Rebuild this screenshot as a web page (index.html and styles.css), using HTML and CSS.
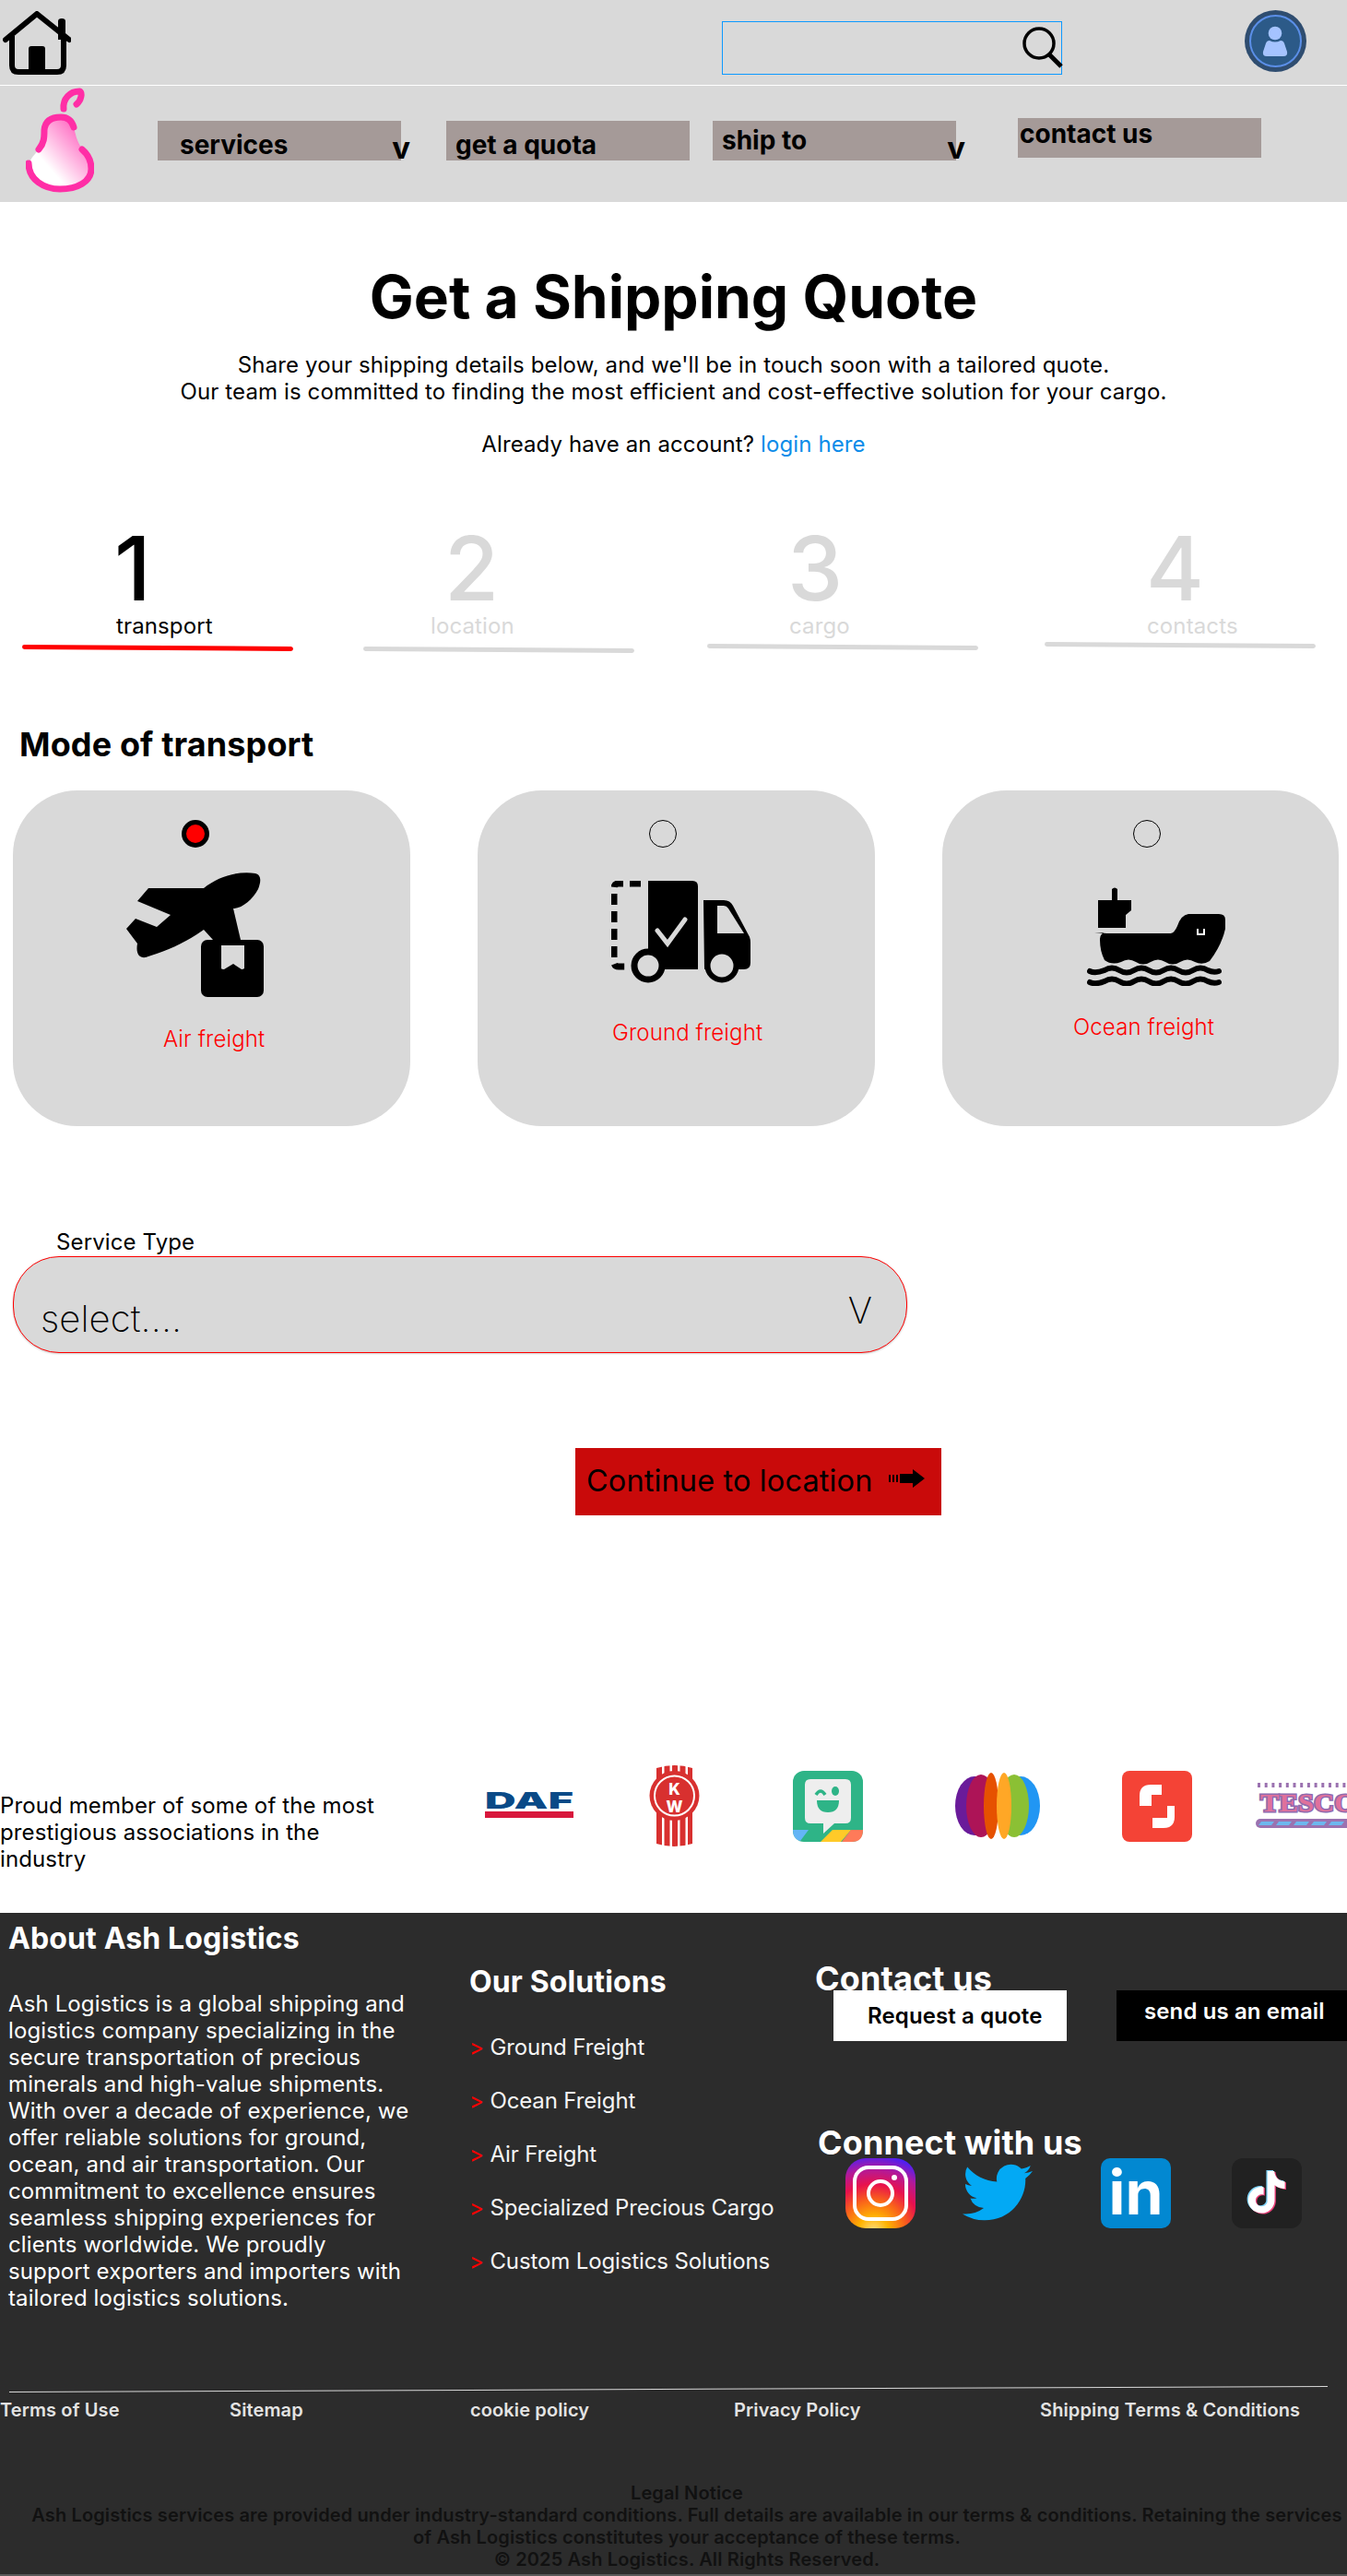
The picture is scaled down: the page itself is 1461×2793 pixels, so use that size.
FILE: index.html
```html
<!DOCTYPE html>
<html lang="en">
<head>
    <meta charset="UTF-8">
    <meta name="viewport" content="width=device-width, initial-scale=1.0">
    <title>Get a Shipping Quote - Ash Logistics</title>
    <link rel="stylesheet" href="styles.css">
</head>
<body>
    <header class="topbar">
        <svg class="home-icon" viewBox="0 0 74 70" width="74" height="70">
            <path d="M3 31 37 3 72 31" fill="none" stroke="#000" stroke-width="6" stroke-linecap="round" stroke-linejoin="round"/>
            <path d="M60 11q0-3 4-3t4 3v20h-8z"/>
            <path d="M10 27v32q0 7 7 7h42q7 0 7-7V27" fill="none" stroke="#000" stroke-width="6"/>
            <path d="M28 66V41q0-3 3-3h12q3 0 3 3v25z"/>
        </svg>
        <div class="search-box">
            <svg class="search-icon" viewBox="0 0 44 45" width="44" height="45">
                <circle cx="18" cy="18" r="16" fill="none" stroke="#000" stroke-width="3.500"/>
                <path d="M29 30 42 43" stroke="#000" stroke-width="5"/>
            </svg>
        </div>
        <svg class="avatar" viewBox="0 0 67 67" width="67" height="67">
            <circle cx="33.500" cy="33.500" r="33.500" fill="#2f4d70"/>
            <circle cx="33.500" cy="33.500" r="27.500" fill="#2c5a88" stroke="#5b8fe8" stroke-width="2"/>
            <circle cx="33" cy="25" r="7.300" fill="#a5c3ff"/>
            <path d="M27 33q6 3 12 0 3 0 4 3l3 9q1 5-4 5H24q-5 0-4-5l3-9q1-3 4-3z" fill="#a5c3ff"/>
        </svg>
    </header>

    <nav class="navbar">
        <svg class="pear" viewBox="0 0 74 114" width="74" height="114">
            <defs>
                <linearGradient id="pearFill" x1="0.1" y1="0.85" x2="0.85" y2="0.1">
                    <stop offset="0.25" stop-color="#fff"/>
                    <stop offset="1" stop-color="#ff5cbc"/>
                </linearGradient>
            </defs>
            <path d="M39 32C26 32 20 38 20 48 19 60 16 64 10 72 4 78 3 84 3 88 5 103 20 110 35 110 55 110 72 102 71 88 71 78 66 72 61 66 55 58 54 50 52 43 50 36 45 32 39 32z" fill="url(#pearFill)"/>
            <path d="M14 67C20 60 20 54 20 46 21 36 28 32 38 32 45 32 50 36 52 43" fill="none" stroke="#ff2ea6" stroke-width="7" stroke-linecap="round"/>
            <path d="M3 82C3 100 20 110 37 110 56 110 71 102 71 88 71 78 67 72 61 67" fill="none" stroke="#ff2ea6" stroke-width="7" stroke-linecap="round"/>
            <path d="M41 23C40 12 48 4 58 4 62 5 60 14 55 18" fill="none" stroke="#ff2ea6" stroke-width="7" stroke-linecap="round"/>
        </svg>
        <a class="nav-item nav-services" href="#">services<span class="nav-caret">v</span></a>
        <a class="nav-item nav-quota" href="#">get a quota</a>
        <a class="nav-item nav-ship" href="#">ship to<span class="nav-caret">v</span></a>
        <a class="nav-item nav-contact" href="#">contact us</a>
    </nav>

    <main>
        <section class="hero">
            <h1>Get a Shipping Quote</h1>
            <p>Share your shipping details below, and we'll be in touch soon with a tailored quote.<br>Our team is committed to finding the most efficient and cost-effective solution for your cargo.</p>
            <p class="hero-login">Already have an account? <a href="#">login here</a></p>
        </section>

        <section class="steps">
            <div class="step step-1 is-active">
                <div class="step-num">1</div>
                <div class="step-label">transport</div>
                <div class="step-line"></div>
            </div>
            <div class="step step-2">
                <div class="step-num">2</div>
                <div class="step-label">location</div>
                <div class="step-line"></div>
            </div>
            <div class="step step-3">
                <div class="step-num">3</div>
                <div class="step-label">cargo</div>
                <div class="step-line"></div>
            </div>
            <div class="step step-4">
                <div class="step-num">4</div>
                <div class="step-label">contacts</div>
                <div class="step-line"></div>
            </div>
        </section>

        <h2 class="mode-title">Mode of transport</h2>
        <section class="cards">
            <div class="card card-air">
                <span class="radio is-checked"></span>
                <svg class="card-icon" viewBox="0 0 150 138" width="150" height="138">
                    <path d="M84 19C100 6 122 0 140 3 147 5 146 12 143 20 137 31 126 41 116 41L124 75H94L84 64C62 80 40 88 21 94 14 95 10 90 12 79L0 63 10 52 33 61 48 48 12 33 24 19z"/>
                    <rect x="81" y="75" width="68" height="62" rx="7"/>
                    <path d="M103 81h25v25q-1 1-3 1l-9-6-10 6q-3 0-3-1z" fill="#d9d9d9"/>
                </svg>
                <span class="card-label">Air freight</span>
            </div>
            <div class="card card-ground">
                <span class="radio"></span>
                <svg class="card-icon" viewBox="0 0 151 111" width="151" height="111">
                    <path d="M32 3H8Q3 3 3 8v80q0 5 5 5h12" fill="none" stroke="#000" stroke-width="7" stroke-dasharray="12 7"/>
                    <path d="M40 0h48q6 0 6 6v90H40z"/>
                    <path d="M50 54l11 14 19-26" fill="none" stroke="#d9d9d9" stroke-width="5" stroke-linecap="round"/>
                    <path d="M100 21h22q7 0 10 6l17 32q2 3 2 8v22q0 7-7 7h-43z"/>
                    <path d="M115 27h7q3 0 5 3l17 27h-29z" fill="#d9d9d9"/>
                    <circle cx="40" cy="92" r="15" fill="#d9d9d9" stroke="#000" stroke-width="7"/>
                    <circle cx="120" cy="92" r="15.500" fill="#d9d9d9" stroke="#000" stroke-width="6"/>
                </svg>
                <span class="card-label">Ground freight</span>
            </div>
            <div class="card card-ocean">
                <span class="radio"></span>
                <svg class="card-icon" viewBox="0 0 150 108" width="150" height="108">
                    <path d="M27 3q3-3 6 0v12h15v11l-6 5v14H12V15h15z"/>
                    <path d="M8 51h83q4-1 7-8 4-12 12-13h33q7 0 7 6v10q-4 18-17 35-8 5-16 1-8-5-16 0-8 5-16 0-8-5-16 0-8 5-16 0-8-5-16 0-10 4-18-2-5-10-5-22 0-8 7-8z"/>
                    <path d="M119 46h2v5h5v-5h2v7h-9z" fill="#fff"/>
                    <path d="M3 92q6 3 16-1 8-5 16 0 8 5 16 0 8-5 16 0 8 5 16 0 8-5 16 0 8 5 16 0 8-5 16 0 6 3 12 1" fill="none" stroke="#000" stroke-width="6" stroke-linecap="round"/>
                    <path d="M3 104q6 3 16-1 8-5 16 0 8 5 16 0 8-5 16 0 8 5 16 0 8-5 16 0 8 5 16 0 8-5 16 0 6 3 12 1" fill="none" stroke="#000" stroke-width="6" stroke-linecap="round"/>
                </svg>
                <span class="card-label">Ocean freight</span>
            </div>
        </section>

        <section class="service">
            <label class="service-label">Service Type</label>
            <div class="service-select">
                <span class="service-value">select....</span>
                <span class="service-caret">V</span>
            </div>
        </section>

        <a class="continue-btn" href="#">
            <span>Continue to location</span>
            <svg viewBox="0 0 39 20" width="39" height="20">
                <path d="M0 6h2v8H0zM4 6h2v8H4zM8 6h2v8H8zM12 5h14V0l13 10-13 10v-5H12z"/>
            </svg>
        </a>

        <section class="members">
            <p class="members-text">Proud member of some of the most prestigious associations in the industry</p>
            <svg class="logo-daf" viewBox="0 0 96 28" width="96" height="28">
                <text class="daf-word" x="0" y="18" textLength="96" lengthAdjust="spacingAndGlyphs">DAF</text>
                <rect y="21" width="96" height="7" fill="#d8173c"/>
            </svg>
            <svg class="logo-kw" viewBox="0 0 55 90" width="55" height="90">
                <path d="M8 4q20-6 39 0v82q-20 6-39 0z" fill="#d8302f"/>
                <path d="M14 0h2.500v90H14zM22.500 0H25v90h-2.500zM31 0h2.500v90H31zM39.500 0H42v90h-2.500z" fill="#fff"/>
                <circle cx="27.500" cy="34" r="27" fill="#d8302f"/>
                <circle cx="27.500" cy="34" r="21.500" fill="#d8302f" stroke="#fff" stroke-width="2"/>
                <text class="kw-text" x="27.500" y="33" text-anchor="middle">K</text>
                <text class="kw-text" x="27.500" y="52" text-anchor="middle">W</text>
            </svg>
            <svg class="logo-bitmoji" viewBox="0 0 76 77" width="76" height="77">
                <rect width="76" height="77" rx="12" fill="#2eb487"/>
                <path d="M0 64h17L8 76Q0 74 0 64z" fill="#64b5f6"/>
                <path d="M43 64h20l-11 13H30z" fill="#ffca28"/>
                <path d="M63 64h13q0 13-12 13H53z" fill="#ff7a59"/>
                <path d="M19 9h38q6 0 6 6v36q0 6-6 6H45L33 68V57H19q-6 0-6-6V15q0-6 6-6z" fill="#eeeeee"/>
                <path d="M25 26q5-8 10 0" fill="none" stroke="#2eb487" stroke-width="3.500"/>
                <ellipse cx="46" cy="22" rx="4" ry="5" fill="#2eb487"/>
                <path d="M26 32h24q0 13-12 13T26 32z" fill="#2eb487"/>
            </svg>
            <svg class="logo-petals" viewBox="0 0 94 72" width="94" height="72">
                <ellipse cx="72" cy="36" rx="21" ry="32" fill="#2196f3"/>
                <ellipse cx="22" cy="36" rx="21" ry="32" fill="#6a1b9a"/>
                <ellipse cx="29" cy="36" rx="16" ry="34" fill="#ad1457"/>
                <ellipse cx="65" cy="36" rx="16" ry="34" fill="#8bc034"/>
                <ellipse cx="40" cy="36" rx="8" ry="36" fill="#e65100"/>
                <ellipse cx="54" cy="36" rx="8" ry="36" fill="#ffa726"/>
            </svg>
            <svg class="logo-shortcut" viewBox="0 0 76 77" width="76" height="77">
                <rect width="76" height="77" rx="8" fill="#f44336"/>
                <path d="M19 38V27q0-12 12-12h12v11H32v12z" fill="#fff"/>
                <path d="M57 38v12q0 12-12 12H33V51h16V38z" fill="#fff"/>
            </svg>
            <svg class="logo-tesco" viewBox="0 0 99 50" width="99" height="50">
                <path class="tesco-dots" d="M2 2.500H99"/>
                <text class="tesco-word" x="5" y="31" textLength="104" lengthAdjust="spacingAndGlyphs">TESCO</text>
                <rect y="39" width="110" height="10" rx="5" fill="#9b72b0"/>
                <path d="M6 42h14l-3 4H3zM25 42h14l-3 4H22zM44 42h14l-3 4H41zM63 42h14l-3 4H60zM82 42h14l-3 4H79z" fill="#6db8ee"/>
            </svg>
        </section>
    </main>

    <footer class="footer">
        <div class="footer-main">
            <div class="footer-about">
                <h3>About Ash Logistics</h3>
                <p>Ash Logistics is a global shipping and logistics company specializing in the secure transportation of precious minerals and high-value shipments. With over a decade of experience, we offer reliable solutions for ground, ocean, and air transportation. Our commitment to excellence ensures seamless shipping experiences for clients worldwide. We proudly support exporters and importers with tailored logistics solutions.</p>
            </div>
            <div class="footer-solutions">
                <h3>Our Solutions</h3>
                <ul>
                    <li><span>&gt;</span> Ground Freight</li>
                    <li><span>&gt;</span> Ocean Freight</li>
                    <li><span>&gt;</span> Air Freight</li>
                    <li><span>&gt;</span> Specialized Precious Cargo</li>
                    <li><span>&gt;</span> Custom Logistics Solutions</li>
                </ul>
            </div>
            <div class="footer-contact">
                <h3 class="contact-title">Contact us</h3>
                <div class="contact-btns">
                    <a class="btn-quote" href="#">Request a quote</a>
                    <a class="btn-email" href="#">send us an email</a>
                </div>
                <h3 class="connect-title">Connect with us</h3>
                <div class="socials">
                    <svg class="social-ig" viewBox="0 0 76 76" width="76" height="76">
                        <defs>
                            <radialGradient id="igFill" cx="0.4" cy="1.05" r="1.1">
                                <stop offset="0" stop-color="#ffe08a"/>
                                <stop offset="0.2" stop-color="#ffb300"/>
                                <stop offset="0.42" stop-color="#f9611b"/>
                                <stop offset="0.62" stop-color="#e8114d"/>
                                <stop offset="0.82" stop-color="#b01a9c"/>
                                <stop offset="1" stop-color="#4b1ff5"/>
                            </radialGradient>
                        </defs>
                        <rect width="76" height="76" rx="22" fill="url(#igFill)"/>
                        <rect x="10" y="10" width="56" height="56" rx="15" fill="none" stroke="#fff" stroke-width="4"/>
                        <circle cx="38" cy="38" r="13" fill="none" stroke="#fff" stroke-width="4"/>
                        <circle cx="53" cy="21" r="3" fill="#fff"/>
                    </svg>
                    <svg class="social-tw" viewBox="0 0 24 20" width="76" height="62" preserveAspectRatio="none">
                        <path d="M23.953 2.57a10 10 0 0 1-2.825.775 4.958 4.958 0 0 0 2.163-2.723c-.951.555-2.005.959-3.127 1.184a4.92 4.92 0 0 0-8.384 4.482C7.69 6.095 4.067 4.13 1.64 1.162a4.822 4.822 0 0 0-.666 2.475c0 1.71.87 3.213 2.188 4.096a4.904 4.904 0 0 1-2.228-.616v.06a4.923 4.923 0 0 0 3.946 4.827 4.996 4.996 0 0 1-2.212.085 4.936 4.936 0 0 0 4.604 3.417 9.867 9.867 0 0 1-6.102 2.105c-.39 0-.779-.023-1.17-.067a13.995 13.995 0 0 0 7.557 2.209c9.053 0 13.998-7.496 13.998-13.985 0-.21 0-.42-.015-.63A9.935 9.935 0 0 0 24 2.59z" fill="#03a9f4"/>
                    </svg>
                    <div class="social-in">in</div>
                    <svg class="social-tt" viewBox="0 0 76 76" width="76" height="76">
                        <rect width="76" height="76" rx="12" fill="#212121"/>
                        <g transform="translate(15 14) scale(1.9)">
                            <path d="M12.525.02c1.31-.02 2.61-.01 3.91-.02.08 1.53.63 3.09 1.75 4.17 1.12 1.11 2.7 1.62 4.24 1.79v4.03c-1.44-.05-2.89-.35-4.2-.97-.57-.26-1.1-.59-1.62-.93-.01 2.92.01 5.84-.02 8.75-.08 1.4-.54 2.79-1.35 3.94-1.31 1.92-3.58 3.17-5.91 3.21-1.43.08-2.86-.31-4.08-1.03-2.02-1.19-3.44-3.37-3.65-5.71-.02-.5-.03-1-.01-1.49.18-1.9 1.12-3.72 2.58-4.96 1.66-1.44 3.98-2.13 6.15-1.72.02 1.48-.04 2.96-.04 4.44-.99-.32-2.15-.23-3.02.37-.63.41-1.11 1.04-1.36 1.75-.21.51-.15 1.07-.14 1.61.24 1.64 1.82 3.02 3.5 2.87 1.12-.01 2.19-.66 2.77-1.61.19-.33.4-.67.41-1.06.1-1.79.06-3.57.07-5.36.01-4.03-.01-8.05.02-12.07z" fill="#81d4fa" transform="translate(-.7 -.5)"/>
                            <path d="M12.525.02c1.31-.02 2.61-.01 3.91-.02.08 1.53.63 3.09 1.75 4.17 1.12 1.11 2.7 1.62 4.24 1.79v4.03c-1.44-.05-2.89-.35-4.2-.97-.57-.26-1.1-.59-1.62-.93-.01 2.92.01 5.84-.02 8.75-.08 1.4-.54 2.79-1.35 3.94-1.31 1.92-3.58 3.17-5.91 3.21-1.43.08-2.86-.31-4.08-1.03-2.02-1.19-3.44-3.37-3.65-5.71-.02-.5-.03-1-.01-1.49.18-1.9 1.12-3.72 2.58-4.96 1.66-1.44 3.98-2.13 6.15-1.72.02 1.48-.04 2.96-.04 4.44-.99-.32-2.15-.23-3.02.37-.63.41-1.11 1.04-1.36 1.75-.21.51-.15 1.07-.14 1.61.24 1.64 1.82 3.02 3.5 2.87 1.12-.01 2.19-.66 2.77-1.61.19-.33.4-.67.41-1.06.1-1.79.06-3.57.07-5.36.01-4.03-.01-8.05.02-12.07z" fill="#ec407a" transform="translate(.7 .5)"/>
                            <path d="M12.525.02c1.31-.02 2.61-.01 3.91-.02.08 1.53.63 3.09 1.75 4.17 1.12 1.11 2.7 1.62 4.24 1.79v4.03c-1.44-.05-2.89-.35-4.2-.97-.57-.26-1.1-.59-1.62-.93-.01 2.92.01 5.84-.02 8.75-.08 1.4-.54 2.79-1.35 3.94-1.31 1.92-3.58 3.17-5.91 3.21-1.43.08-2.86-.31-4.08-1.03-2.02-1.19-3.44-3.37-3.65-5.71-.02-.5-.03-1-.01-1.49.18-1.9 1.12-3.72 2.58-4.96 1.66-1.44 3.98-2.13 6.15-1.72.02 1.48-.04 2.96-.04 4.44-.99-.32-2.15-.23-3.02.37-.63.41-1.11 1.04-1.36 1.75-.21.51-.15 1.07-.14 1.61.24 1.64 1.82 3.02 3.5 2.87 1.12-.01 2.19-.66 2.77-1.61.19-.33.4-.67.41-1.06.1-1.79.06-3.57.07-5.36.01-4.03-.01-8.05.02-12.07z" fill="#fff"/>
                        </g>
                    </svg>
                </div>
            </div>
        </div>

        <div class="footer-rule"></div>
        <div class="footer-links">
            <a href="#">Terms of Use</a>
            <a href="#">Sitemap</a>
            <a href="#">cookie policy</a>
            <a href="#">Privacy Policy</a>
            <a href="#">Shipping Terms &amp; Conditions</a>
        </div>
        <div class="legal">
            Legal Notice<br>
            Ash Logistics services are provided under industry-standard conditions. Full details are available in our terms &amp; conditions. Retaining the services of Ash Logistics constitutes your acceptance of these terms.<br>
            &copy; 2025 Ash Logistics. All Rights Reserved.
        </div>
    </footer>
</body>
</html>
```

FILE: styles.css
```css
body {
    margin: 0;
    font-family: Inter, "Noto Sans", sans-serif;
    color: #000;
    background-color: #fff;
    letter-spacing: 0.12px;
    overflow-x: hidden;
}
a {
    color: inherit;
    text-decoration: none;
}
h1, h2, h3, p, ul {
    margin: 0;
    padding: 0;
}

/* top bar */
.topbar {
    height: 92px;
    background-color: #d9d9d9;
    border-bottom: 1px solid #fff;
    display: flex;
    align-items: flex-start;
}
.home-icon {
    margin: 12px 0 0 3px;
}
.search-box {
    box-sizing: border-box;
    width: 369px;
    height: 58px;
    margin: 23px 0 0 706px;
    border: 1px solid #0d99ff;
    display: flex;
    justify-content: flex-end;
    padding-top: 5px;
}
.search-icon {
    margin-right: -2px;
}
.avatar {
    margin: 11px 0 0 198px;
}

/* nav */
.navbar {
    height: 126px;
    background-color: #d9d9d9;
    display: flex;
    align-items: flex-start;
}
.pear {
    margin: 2px 69px 0 28px;
}
.nav-item {
    box-sizing: border-box;
    position: relative;
    width: 264px;
    height: 43px;
    margin-top: 38px;
    background-color: #a59a98;
    font-size: 28px;
    font-weight: 700;
    line-height: 34px;
    letter-spacing: 0;
}
.nav-services {
    padding: 9px 0 0 24px;
    margin-right: 49px;
}
.nav-quota {
    padding: 9px 0 0 10px;
    margin-right: 25px;
}
.nav-ship {
    padding: 4px 0 0 10px;
    margin-right: 67px;
}
.nav-contact {
    margin-top: 35px;
    padding: 0 0 0 2px;
}
.nav-caret {
    position: absolute;
    right: -10px;
    top: 12px;
    font-size: 33px;
}

/* hero */
.hero {
    padding-top: 64px;
    text-align: center;
    font-size: 24px;
    line-height: 29px;
}
.hero h1 {
    font-size: 64px;
    font-weight: 700;
    line-height: 77px;
    letter-spacing: 0;
    margin-bottom: 21px;
}
.hero-login {
    margin-top: 28px;
}
.hero-login a {
    color: #0d8ce9;
}

/* steps */
.steps {
    display: flex;
    align-items: flex-start;
    margin-top: 72px;
    padding-left: 24px;
    height: 141px;
}
.step {
    width: 294px;
    flex: none;
    color: #d9d9d9;
}
.step-1 {
    margin-right: 76px;
}
.step-2 {
    margin-right: 79px;
}
.step-3 {
    margin-right: 72px;
}
.step.is-active {
    color: #000;
}
.step-num {
    font-size: 96px;
    font-weight: 500;
    line-height: 96px;
    height: 96px;
    letter-spacing: 0;
}
.step-label {
    font-size: 24px;
    line-height: 29px;
}
.step-line {
    height: 5px;
    border-radius: 3px;
    background-color: #d9d9d9;
    transform: rotate(0.4deg);
    margin-top: 7px;
}
.step.is-active .step-line {
    background-color: #ff0000;
}
.step-1 .step-num { padding-left: 100px; }
.step-1 .step-label { padding-left: 102px; }
.step-2 .step-num { padding-left: 88px; }
.step-2 .step-label { padding-left: 73px; }
.step-2 .step-line { margin-top: 9px; }
.step-3 .step-num { padding-left: 87px; }
.step-3 .step-label { padding-left: 89px; }
.step-3 .step-line { margin-top: 6px; }
.step-4 .step-num { padding-left: 110px; }
.step-4 .step-label { padding-left: 111px; }
.step-4 .step-line { margin-top: 4px; }

.mode-title {
    font-size: 36px;
    font-weight: 700;
    line-height: 44px;
    margin: 76px 0 0 21px;
}

/* transport cards */
.cards {
    display: flex;
    gap: 73px;
    margin: 28px 0 0 14px;
}
.card {
    width: 431px;
    height: 364px;
    border-radius: 70px;
    background-color: #d9d9d9;
    display: flex;
    flex-direction: column;
    align-items: flex-start;
}
.radio {
    box-sizing: border-box;
    width: 30px;
    height: 30px;
    margin-top: 32px;
    border-radius: 50%;
    border: 1px solid #000;
}
.radio.is-checked {
    border: 5px solid #000;
    background-color: #ff0000;
}
.card-label {
    color: #ff0000;
    font-size: 24px;
    font-weight: 300;
    line-height: 29px;
}
.card-air .radio { margin-left: 183px; }
.card-air .card-icon { margin: 25px 0 0 123px; }
.card-air .card-label { margin: 30px 0 0 163px; }
.card-ground .radio { margin-left: 186px; }
.card-ground .card-icon { margin: 36px 0 0 145px; }
.card-ground .card-label { margin: 39px 0 0 146px; }
.card-ocean { width: 430px; }
.card-ocean .radio { margin-left: 207px; }
.card-ocean .card-icon { margin: 42px 0 0 157px; }
.card-ocean .card-label { margin: 30px 0 0 142px; }

/* service type */
.service {
    margin: 111px 0 0 14px;
}
.service-label {
    display: block;
    font-size: 24px;
    line-height: 29px;
    margin: 0 0 1px 47px;
}
.service-select {
    box-sizing: border-box;
    width: 970px;
    height: 105px;
    border: 1px solid #ff0000;
    border-radius: 50px;
    background-color: #d9d9d9;
    box-shadow: 0 1px 2px rgba(0, 0, 0, 0.2);
    display: flex;
    justify-content: space-between;
    align-items: flex-start;
    padding: 0 37px 0 29px;
    font-weight: 200;
}
.service-value {
    font-size: 40px;
    line-height: 48px;
    margin-top: 43px;
}
.service-caret {
    font-size: 40px;
    line-height: 48px;
    margin-top: 34px;
}

.continue-btn {
    display: flex;
    box-sizing: border-box;
    width: 397px;
    height: 73px;
    margin: 103px 0 0 624px;
    padding: 0 18px 2px 12px;
    align-items: center;
    justify-content: space-between;
    background-color: #c90a0a;
    font-size: 32.500px;
    white-space: nowrap;
}
.continue-btn svg {
    margin-bottom: 6px;
}

/* member logos */
.members {
    height: 431px;
    box-sizing: border-box;
    padding-top: 270px;
    overflow: hidden;
    display: flex;
    align-items: flex-start;
}
.members svg {
    flex: none;
}
.members-text {
    flex: none;
    width: 420px;
    margin-top: 30px;
    font-size: 24px;
    line-height: 29px;
}
.logo-daf { margin: 30px 0 0 106px; }
.logo-kw { margin-left: 82px; }
.logo-bitmoji { margin: 7px 0 0 101px; }
.logo-petals { margin: 9px 0 0 99px; }
.logo-shortcut { margin: 7px 0 0 88px; }
.logo-tesco { margin: 20px 0 0 69px; }
.daf-word {
    font-size: 25px;
    font-weight: 900;
    fill: #0a4a87;
}
.kw-text {
    font-size: 17px;
    font-weight: 800;
    fill: #fff;
}
.tesco-dots {
    fill: none;
    stroke: #9b72b0;
    stroke-width: 5px;
    stroke-dasharray: 3 4.700;
}
.tesco-word {
    font-family: "Liberation Serif", serif;
    font-size: 28px;
    font-weight: 700;
    fill: #e0719b;
    stroke: #8e6bb0;
    stroke-width: 3px;
    paint-order: stroke;
}

/* footer */
.footer {
    box-sizing: border-box;
    height: 719px;
    background-color: #2c2c2c;
    border-bottom: 2px solid #5a5a5a;
    color: #fff;
}
.footer-main {
    height: 516px;
    display: flex;
    align-items: flex-start;
}
.footer h3 {
    font-size: 32px;
    font-weight: 700;
    line-height: 39px;
}
.footer-about {
    box-sizing: border-box;
    width: 509px;
    padding: 8px 0 0 9px;
}
.footer-about p {
    width: 436px;
    margin-top: 37px;
    font-size: 24px;
    line-height: 29px;
}
.footer-solutions {
    width: 375px;
    padding-top: 55px;
}
.footer-solutions ul {
    list-style: none;
    margin-top: 37px;
}
.footer-solutions li {
    font-size: 24px;
    line-height: 29px;
    margin-bottom: 29px;
    color: #f5f5f5;
    white-space: nowrap;
    letter-spacing: -0.12px;
}
.footer-solutions li span {
    color: #ff0000;
}
.footer-contact {
    flex: 1;
    padding-top: 49px;
}
.footer .contact-title {
    position: relative;
    font-size: 36px;
    line-height: 44px;
    margin-bottom: -9px;
}
.contact-btns {
    position: relative;
    display: flex;
    gap: 54px;
    margin-left: 20px;
    font-size: 24px;
    font-weight: 600;
}
.btn-quote {
    box-sizing: border-box;
    width: 253px;
    height: 55px;
    padding: 13px 0 0 37px;
    background-color: #fff;
    color: #000;
}
.btn-email {
    box-sizing: border-box;
    flex: 1;
    height: 55px;
    padding: 8px 0 0 30px;
    background-color: #000;
}
.footer .connect-title {
    font-size: 36px;
    line-height: 44px;
    margin: 88px 0 0 3px;
}
.socials {
    display: flex;
    align-items: flex-start;
    margin: -5px 0 0 33px;
}
.social-tw {
    margin: 6px 0 0 51px;
}
.social-in {
    box-sizing: border-box;
    width: 76px;
    height: 76px;
    margin-left: 74px;
    border-radius: 10px;
    background-color: #0288d1;
    font-size: 66px;
    font-weight: 700;
    line-height: 74px;
    letter-spacing: 0;
    text-align: center;
}
.social-tt {
    margin-left: 66px;
}
.footer-rule {
    height: 1px;
    margin: 0 21px 0 10px;
    background-color: #d9d9d9;
    transform: rotate(-0.24deg);
}
.footer-links {
    display: grid;
    grid-template-columns: 249px 261px 286px 332px 1fr;
    margin-top: 10px;
    font-size: 20px;
    font-weight: 600;
    line-height: 24px;
    color: #e3e3e3;
}
.legal {
    width: 1430px;
    margin: 66px 0 0 30px;
    text-align: center;
    font-size: 20px;
    font-weight: 600;
    line-height: 24px;
    color: #111;
}
```
